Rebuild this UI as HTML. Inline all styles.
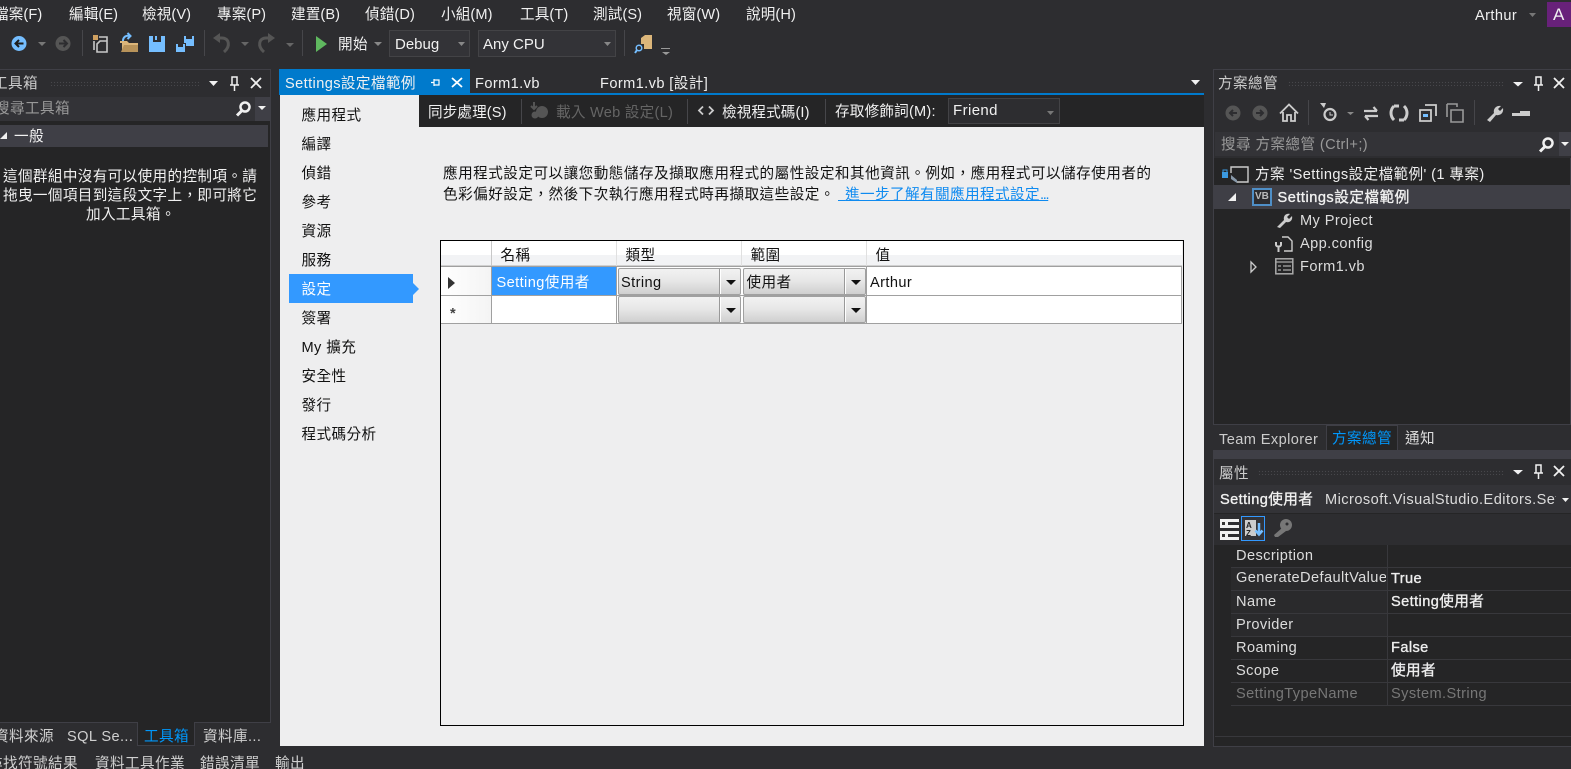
<!DOCTYPE html>
<html><head><meta charset="utf-8"><style>
html,body{margin:0;padding:0;background:#2d2d30;width:1571px;height:769px;overflow:hidden}
body{position:relative;font-family:"Liberation Sans","Noto Sans CJK TC",sans-serif;font-size:14.6px;color:#f1f1f1}
.t{position:absolute;white-space:nowrap;line-height:20px;margin-top:1px;letter-spacing:.4px}
.m{letter-spacing:.1px}
.sb{-webkit-text-stroke:.35px currentColor}
.b{position:absolute;box-sizing:border-box}
svg{position:absolute;overflow:visible}
.d{color:#111}
.r{position:absolute;background:#38383c;height:1px}
.grip{position:absolute;height:5px;background-image:radial-gradient(#47474b 0.7px,transparent 0.8px);background-size:3px 3px}
.cb{position:absolute;box-sizing:border-box;width:123px;height:27px;border:1px solid #a0a0a0;border-radius:2px;background:linear-gradient(#f2f2f2,#e6e6e6 50%,#cfcfcf)}
.cb i{position:absolute;right:19px;top:0;bottom:0;width:2px;box-sizing:border-box;background:#fff;border-left:1px solid #999}
.cb b{position:absolute;right:4px;top:11px;border:5px solid transparent;border-top:5px solid #111;border-bottom:0}
</style></head><body>
<!-- menu -->
<div class="t m" style="left:-6px;top:4px">檔案(F)</div>
<div class="t m" style="left:69px;top:4px">編輯(E)</div>
<div class="t m" style="left:142px;top:4px">檢視(V)</div>
<div class="t m" style="left:217px;top:4px">專案(P)</div>
<div class="t m" style="left:291px;top:4px">建置(B)</div>
<div class="t m" style="left:365px;top:4px">偵錯(D)</div>
<div class="t m" style="left:441px;top:4px">小組(M)</div>
<div class="t m" style="left:520px;top:4px">工具(T)</div>
<div class="t m" style="left:593px;top:4px">測試(S)</div>
<div class="t m" style="left:667px;top:4px">視窗(W)</div>
<div class="t m" style="left:746px;top:4px">說明(H)</div>
<div class="t" style="left:1475px;top:5px">Arthur</div>
<svg style="left:1529px;top:13px" width="8" height="4"><path d="M0 0h7l-3.500 4z" fill="#777"/></svg>
<div class="b" style="left:1547px;top:2px;width:24px;height:25px;background:#68217a"></div>
<div class="t" style="left:1553px;top:4px;font-size:17px">A</div>
<!-- toolbar -->
<svg style="left:0;top:28px" width="680" height="34">
<circle cx="19" cy="15.500" r="7.500" fill="#75beff"/><path d="M23.500 15.500h-8m3.500-3.500l-3.500 3.500 3.500 3.500" stroke="#1e1e1e" stroke-width="2" fill="none"/>
<path d="M38 14h8l-4 4z" fill="#777"/>
<circle cx="63" cy="15.500" r="7.500" fill="#555"/><path d="M59 15.500h8m-3.500-3.500l3.500 3.500-3.500 3.500" stroke="#2d2d30" stroke-width="2" fill="none"/>
<rect x="82" y="2" width="1" height="26" fill="#46464a"/>
<path d="M99 9h8v5M100 13h7v11h-10v-8zM94 13v9" stroke="#c8c8c8" stroke-width="1.600" fill="none"/><path d="M93 7h5v5h-5z" fill="#d0a060"/>
<path d="M120 15h2v9h16v-9h-9l-2-2-7 0z" fill="#dcb67a"/><path d="M121 24l3-7h14v7z" fill="#b8935a"/><path d="M123 13c0-4 3-6 7-5m-2.500-3l3 3-3 3" stroke="#75beff" stroke-width="2" fill="none"/>
<path d="M149 8h16v16h-16z" fill="#75beff"/><path d="M153 8h8v6h-8z" fill="#2d2d30"/><rect x="155" y="8" width="2" height="4" fill="#75beff"/>
<path d="M176 16h9v8h-9zM184 8h10v10h-8v-3h-2z" fill="#75beff"/><path d="M178 16h5v3h-5zM186 8h6v3h-6z" fill="#2d2d30"/>
<rect x="204" y="2" width="1" height="26" fill="#46464a"/>
<path d="M213 10l7-5v10z" fill="#555"/><path d="M219 10h3c7 0 9 8 2 14" stroke="#555" stroke-width="3" fill="none"/>
<path d="M241 14h8l-4 4z" fill="#666"/>
<path d="M275 10l-7-5v10z" fill="#555"/><path d="M269 10h-3c-7 0-9 8-2 14" stroke="#555" stroke-width="3" fill="none"/>
<path d="M286 15h8l-4 4z" fill="#666"/>
<rect x="302" y="2" width="1" height="26" fill="#46464a"/>
<path d="M316 8l11 8-11 8z" fill="#5fb85f"/>
<path d="M374 14h8l-4 4z" fill="#888"/>
<rect x="624" y="2" width="1" height="26" fill="#46464a"/>
<path d="M641 10l4-3h7v14h-8v-5h-3z" fill="#dcb67a"/><circle cx="639" cy="20" r="2.800" stroke="#75beff" stroke-width="1.500" fill="none"/><path d="M637 22l-2 3" stroke="#75beff" stroke-width="2"/>
<path d="M662 24h8l-4 3z" fill="#999"/><rect x="661" y="20" width="9" height="1" fill="#999"/>
</svg>
<div class="t" style="left:338px;top:34px">開始</div>
<div class="b" style="left:389px;top:30px;width:81px;height:27px;border:1px solid #434346;background:#333337"></div>
<div class="t" style="left:395px;top:34px;font-size:15px;letter-spacing:0">Debug</div>
<svg style="left:458px;top:42px" width="8" height="4"><path d="M0 0h7l-3.500 4z" fill="#888"/></svg>
<div class="b" style="left:478px;top:30px;width:138px;height:27px;border:1px solid #434346;background:#333337"></div>
<div class="t" style="left:483px;top:34px;font-size:15px;letter-spacing:0">Any CPU</div>
<svg style="left:604px;top:42px" width="8" height="4"><path d="M0 0h7l-3.500 4z" fill="#888"/></svg>
<!-- toolbox -->
<div class="b" style="left:-2px;top:69px;width:273px;height:654px;border:1px solid #3f3f46;background:#252526"></div>
<div class="b" style="left:0;top:70px;width:270px;height:27px;background:#2d2d30"></div>
<div class="t" style="left:-7px;top:73px;color:#ccc">工具箱</div>
<div class="grip" style="left:50px;top:81px;width:150px"></div>
<svg style="left:208px;top:74px" width="60" height="20"><path d="M1 7h9l-4.500 5z" fill="#f1f1f1"/><path d="M24 3h5v8h-5zM22 11h9M26.500 11v6" stroke="#f1f1f1" stroke-width="1.500" fill="none"/><path d="M43 4l10 10M53 4l-10 10" stroke="#f1f1f1" stroke-width="1.800"/></svg>
<div class="b" style="left:0;top:97px;width:270px;height:24px;background:#333337"></div>
<div class="b" style="left:255px;top:97px;width:15px;height:24px;background:#3f3f46"></div>
<div class="t" style="left:-5px;top:98px;color:#999">搜尋工具箱</div>
<svg style="left:234px;top:99px" width="32" height="20"><circle cx="11" cy="8" r="4.500" stroke="#f1f1f1" stroke-width="2.500" fill="none"/><path d="M8 11.500l-5 5" stroke="#f1f1f1" stroke-width="3"/><path d="M24 7h8l-4 4z" fill="#f1f1f1"/></svg>
<div class="b" style="left:0;top:125px;width:268px;height:22px;background:#3f3f46"></div>
<svg style="left:0;top:132px" width="8" height="8"><path d="M7 0v7h-7z" fill="#f1f1f1"/></svg>
<div class="t" style="left:14px;top:126px">一般</div>
<div class="t" style="left:3px;top:166px;letter-spacing:.36px">這個群組中沒有可以使用的控制項。請</div>
<div class="t" style="left:3px;top:185px;letter-spacing:.36px">拖曳一個項目到這段文字上，即可將它</div>
<div class="t" style="left:86px;top:204px;letter-spacing:.36px">加入工具箱。</div>
<div class="b" style="left:137px;top:722px;width:58px;height:24px;background:#252526;border:1px solid #3f3f46;border-top:0"></div>
<div class="t" style="left:-6px;top:726px;color:#d0d0d0">資料來源</div>
<div class="t" style="left:67px;top:726px;color:#d0d0d0">SQL Se...</div>
<div class="t" style="left:144px;top:726px;color:#0097fb">工具箱</div>
<div class="t" style="left:203px;top:726px;color:#d0d0d0">資料庫...</div>
<div class="t" style="left:-12px;top:753px;color:#d0d0d0">尋找符號結果</div>
<div class="t" style="left:95px;top:753px;color:#d0d0d0">資料工具作業</div>
<div class="t" style="left:200px;top:753px;color:#d0d0d0">錯誤清單</div>
<div class="t" style="left:275px;top:753px;color:#d0d0d0">輸出</div>
<!-- document -->
<div class="b" style="left:279px;top:69px;width:191px;height:24px;background:#007acc"></div>
<div class="b" style="left:279px;top:93px;width:925px;height:2px;background:#007acc"></div>
<div class="t" style="left:285px;top:73px">Settings設定檔範例</div>
<svg style="left:428px;top:75px" width="40" height="15"><path d="M3 7.500h3M6 5h5v5h-5zM6 4v7" stroke="#fff" stroke-width="1.200" fill="none"/><path d="M24 3l10 9M34 3l-10 9" stroke="#fff" stroke-width="1.800"/></svg>
<div class="t" style="left:475px;top:73px">Form1.vb</div>
<div class="t" style="left:600px;top:73px">Form1.vb [設計]</div>
<svg style="left:1191px;top:80px" width="10" height="6"><path d="M0 0h9l-4.500 5z" fill="#f1f1f1"/></svg>
<div class="b" style="left:280px;top:95px;width:924px;height:651px;background:#eeeeef"></div>
<div class="b" style="left:419px;top:95px;width:785px;height:32px;background:#252526"></div>
<div class="t m" style="left:428px;top:102px">同步處理(S)</div>
<div class="b" style="left:521px;top:99px;width:1px;height:25px;background:#46464a"></div>
<svg style="left:530px;top:101px" width="20" height="20"><circle cx="12" cy="11" r="6" fill="#555"/><circle cx="5" cy="14" r="3.500" fill="#555"/><path d="M4 1v6M1 5l3 3 3-3" stroke="#555" stroke-width="2" fill="none"/></svg>
<div class="t" style="left:556px;top:102px;color:#656565;letter-spacing:.25px">載入 Web 設定(L)</div>
<div class="b" style="left:687px;top:99px;width:1px;height:25px;background:#46464a"></div>
<svg style="left:698px;top:105px" width="16" height="12"><path d="M5 1.500l-4 4 4 4M11 1.500l4 4-4 4" stroke="#ccc" stroke-width="1.800" fill="none"/></svg>
<div class="t m" style="left:722px;top:102px">檢視程式碼(I)</div>
<div class="b" style="left:825px;top:99px;width:1px;height:25px;background:#46464a"></div>
<div class="t" style="left:835px;top:101px;letter-spacing:.2px">存取修飾詞(M):</div>
<div class="b" style="left:948px;top:98px;width:112px;height:26px;border:1px solid #434346;background:#2d2d30"></div>
<div class="t" style="left:953px;top:100px;font-size:15px">Friend</div>
<svg style="left:1047px;top:111px" width="8" height="4"><path d="M0 0h7l-3.500 4z" fill="#777"/></svg>
<!-- nav -->
<div class="t d" style="left:301.500px;top:105px">應用程式</div>
<div class="t d" style="left:301.500px;top:134px">編譯</div>
<div class="t d" style="left:301.500px;top:163px">偵錯</div>
<div class="t d" style="left:301.500px;top:192px">參考</div>
<div class="t d" style="left:301.500px;top:221px">資源</div>
<div class="t d" style="left:301.500px;top:250px">服務</div>
<div class="b" style="left:289px;top:274px;width:124px;height:29px;background:#3399ff"></div>
<svg style="left:413px;top:283px" width="6" height="12"><path d="M0 0l6 6-6 6z" fill="#3399ff"/></svg>
<div class="t" style="left:301.500px;top:279px;color:#fff">設定</div>
<div class="t d" style="left:301.500px;top:308px">簽署</div>
<div class="t d" style="left:301.500px;top:337px">My 擴充</div>
<div class="t d" style="left:301.500px;top:366px">安全性</div>
<div class="t d" style="left:301.500px;top:395px">發行</div>
<div class="t d" style="left:301.500px;top:424px">程式碼分析</div>
<div class="t d" style="left:443px;top:163px;letter-spacing:.48px">應用程式設定可以讓您動態儲存及擷取應用程式的屬性設定和其他資訊。例如，應用程式可以儲存使用者的</div>
<div class="t d" style="left:443px;top:184px;letter-spacing:.48px">色彩偏好設定，然後下次執行應用程式時再擷取這些設定。</div>
<div class="t" style="left:838px;top:184px;color:#0e8af0;text-decoration:underline;white-space:pre"><span style="letter-spacing:3px"> </span>進一步了解有關應用程式設定<span style="letter-spacing:-1.300px">...</span></div>
<!-- grid -->
<div class="b" style="left:440px;top:240px;width:744px;height:486px;border:1px solid #000;background:#eeeeef"></div>
<div class="b" style="left:441px;top:241px;width:741px;height:25px;background:linear-gradient(#fff,#fff 55%,#f2f3f5 56%,#f2f3f5)"></div>
<div class="b" style="left:441px;top:265px;width:741px;height:1px;background:#d0d0d0"></div>
<div class="b" style="left:441px;top:266px;width:741px;height:1px;background:#a0a0a0"></div>
<div class="b" style="left:491px;top:241px;width:1px;height:25px;background:#c8c8c8"></div>
<div class="b" style="left:616px;top:241px;width:1px;height:25px;background:#e0e0e0"></div>
<div class="b" style="left:741px;top:241px;width:1px;height:25px;background:#e0e0e0"></div>
<div class="b" style="left:866px;top:241px;width:1px;height:25px;background:#e0e0e0"></div>
<div class="t d" style="left:500.500px;top:245px">名稱</div>
<div class="t d" style="left:625.500px;top:245px">類型</div>
<div class="t d" style="left:750.500px;top:245px">範圍</div>
<div class="t d" style="left:875.500px;top:245px">值</div>
<div class="b" style="left:441px;top:267px;width:50px;height:56px;background:linear-gradient(90deg,#fff,#f4f4f4)"></div>
<div class="b" style="left:492px;top:267px;width:689px;height:56px;background:#fff"></div>
<div class="b" style="left:492px;top:267px;width:124px;height:28px;background:#3399ff"></div>
<div class="b" style="left:441px;top:295px;width:741px;height:1px;background:#a0a0a0"></div>
<div class="b" style="left:441px;top:323px;width:741px;height:1px;background:#a0a0a0"></div>
<div class="b" style="left:491px;top:267px;width:1px;height:57px;background:#a0a0a0"></div>
<div class="b" style="left:616px;top:267px;width:1px;height:57px;background:#a0a0a0"></div>
<div class="b" style="left:866px;top:267px;width:1px;height:57px;background:#a0a0a0"></div>
<div class="b" style="left:1181px;top:266px;width:1px;height:58px;background:#a0a0a0"></div>
<svg style="left:448px;top:277px" width="8" height="13"><path d="M0 0l7 6-7 6z" fill="#333"/></svg>
<div class="t" style="left:450px;top:303px;color:#444;font-weight:bold">*</div>
<div class="t" style="left:496.500px;top:272px;color:#fff">Setting使用者</div>
<div class="cb" style="left:618px;top:268px"><i></i><b></b></div>
<div class="cb" style="left:743px;top:268px"><i></i><b></b></div>
<div class="cb" style="left:618px;top:296px"><i></i><b></b></div>
<div class="cb" style="left:743px;top:296px"><i></i><b></b></div>
<div class="t d" style="left:621px;top:272px">String</div>
<div class="t d" style="left:746.500px;top:272px">使用者</div>
<div class="t d" style="left:870px;top:272px">Arthur</div>
<!-- solution explorer -->
<div class="b" style="left:1213px;top:69px;width:358px;height:356px;border:1px solid #3f3f46;background:#252526"></div>
<div class="b" style="left:1214px;top:70px;width:357px;height:88px;background:#2d2d30"></div>
<div class="t" style="left:1218px;top:73px;color:#ccc">方案總管</div>
<div class="grip" style="left:1288px;top:81px;width:216px"></div>
<svg style="left:1510px;top:74px" width="60" height="20"><path d="M3 8h10l-5 4.500z" fill="#f1f1f1"/><path d="M26 3h5v8h-5zM24 11h9M28.500 11v6" stroke="#f1f1f1" stroke-width="1.500" fill="none"/><path d="M44 4l10 10M54 4l-10 10" stroke="#f1f1f1" stroke-width="1.800"/></svg>
<svg style="left:1220px;top:100px" width="340" height="26">
<circle cx="13" cy="13" r="7.500" fill="#555"/><path d="M17 13h-7m3-3l-3 3 3 3" stroke="#2d2d30" stroke-width="2" fill="none"/>
<circle cx="40" cy="13" r="7.500" fill="#555"/><path d="M36 13h7m-3-3l3 3-3 3" stroke="#2d2d30" stroke-width="2" fill="none"/>
<path d="M60 13.500l9-9 9 9M63 12v9h4v-6h4v6h4v-9" stroke="#ccc" stroke-width="1.800" fill="none"/>
<rect x="88" y="0" width="1" height="25" fill="#46464a"/>
<circle cx="110" cy="14.500" r="5.500" stroke="#ccc" stroke-width="2.200" fill="none"/><path d="M110 12v3h3" stroke="#ccc" fill="none"/><path d="M100 3l6 0-2 5z" fill="#ccc"/>
<path d="M127 12h7l-3.500 3z" fill="#888"/>
<path d="M144 11h13m-3.500-4l3.500 4M158 16h-13m3.500 4l-3.500-4" stroke="#ccc" stroke-width="2.200" fill="none"/>
<path d="M174 6c-4 4-4 10 0 14M184 20c4-4 4-10 0-14M174 6h5M184 20h-5" stroke="#ccc" stroke-width="3" fill="none"/>
<path d="M200 10h11v11h-11zM205 5h11v11" stroke="#ccc" stroke-width="1.800" fill="none"/><rect x="203" y="14" width="5" height="3" fill="#75beff"/>
<path d="M231 10h12v12h-12zM227 4h10v3M227 4v13" stroke="#999" stroke-width="1.600" fill="none"/>
<rect x="254" y="0" width="1" height="25" fill="#46464a"/>
<path d="M267 20l7-7c-1-4 2-8 7-7l-3 3 2 2 3-3c1 5-3 8-7 7l-6 7z" fill="#ccc"/>
<path d="M292 13h8v-2h10v5h-18z" fill="#ccc"/>
</svg>
<div class="b" style="left:1215px;top:132px;width:356px;height:24px;background:#333337"></div>
<div class="b" style="left:1559px;top:132px;width:12px;height:24px;background:#3f3f46"></div>
<div class="t" style="left:1221px;top:134px;color:#999">搜尋 方案總管 (Ctrl+;)</div>
<svg style="left:1537px;top:135px" width="34" height="20"><circle cx="11" cy="8" r="4.500" stroke="#f1f1f1" stroke-width="2.500" fill="none"/><path d="M8 11.500l-5 5" stroke="#f1f1f1" stroke-width="3"/><path d="M24 7h8l-4 4z" fill="#f1f1f1"/></svg>
<svg style="left:1220px;top:165px" width="30" height="20"><rect x="2" y="7" width="6" height="6" fill="#3b9ae1"/><path d="M3 7v-2h4v2" stroke="#3b9ae1" fill="none"/><path d="M11 8v-6h17v15h-11" stroke="#ccc" stroke-width="1.400" fill="none"/><path d="M11 10l6 5v3l-6-4z" fill="#89a"/></svg>
<div class="t" style="left:1255px;top:164px;color:#eee">方案 'Settings設定檔範例' (1 專案)</div>
<div class="b" style="left:1214px;top:185px;width:357px;height:24px;background:#3f3f46"></div>
<svg style="left:1228px;top:193px" width="9" height="9"><path d="M8 0v8h-8z" fill="#f1f1f1"/></svg>
<div class="b" style="left:1252px;top:188px;width:20px;height:18px;border:2px solid #4f8fc7;background:#2d2d30"></div>
<div class="t" style="left:1255px;top:186px;font-size:10px;font-weight:bold;color:#bbb;letter-spacing:0">VB</div>
<div class="t sb" style="left:1277.500px;top:187px;color:#f1f1f1;letter-spacing:.5px">Settings設定檔範例</div>
<svg style="left:1276px;top:211px" width="18" height="18"><path d="M1 16l7-7c-1-4 2-7 6-6l-3 3 2 2 3-3c1 4-2 7-6 6l-6 6z" fill="#ccc"/></svg>
<div class="t" style="left:1300px;top:210px;color:#ddd">My Project</div>
<svg style="left:1275px;top:235px" width="20" height="18"><path d="M7 2h6l4 4v10h-8" stroke="#ccc" stroke-width="1.400" fill="none"/><path d="M1 7v3c0 2 5 2 5 0v-3M3.500 11v6" stroke="#ccc" stroke-width="2" fill="none"/></svg>
<div class="t" style="left:1300px;top:233px;color:#ddd">App.config</div>
<svg style="left:1250px;top:261px" width="8" height="12"><path d="M1 1l5 5-5 5z" stroke="#ccc" stroke-width="1.300" fill="none"/></svg>
<svg style="left:1275px;top:258px" width="19" height="17"><rect x=".8" y=".8" width="17" height="15" stroke="#aaa" stroke-width="1.500" fill="none"/><path d="M1 4h17M3 8h3M8 8h8M3 12h3M8 12h8" stroke="#aaa" stroke-width="1.300" fill="none"/></svg>
<div class="t" style="left:1300px;top:256px;color:#ddd">Form1.vb</div>
<div class="b" style="left:1326px;top:425px;width:72px;height:25px;background:#252526;border:1px solid #3f3f46;border-bottom:0"></div>
<div class="t" style="left:1219px;top:429px;color:#ccc">Team Explorer</div>
<div class="t" style="left:1332px;top:428px;color:#0097fb">方案總管</div>
<div class="t" style="left:1405px;top:428px;color:#ddd">通知</div>
<div class="b" style="left:1213px;top:450px;width:358px;height:8px;background:#3f3f46"></div>
<!-- properties -->
<div class="b" style="left:1213px;top:458px;width:358px;height:289px;border:1px solid #3f3f46;background:#252526"></div>
<div class="b" style="left:1214px;top:459px;width:357px;height:86px;background:#2d2d30"></div>
<div class="t" style="left:1219px;top:463px;color:#ccc">屬性</div>
<div class="grip" style="left:1258px;top:470px;width:246px"></div>
<svg style="left:1510px;top:463px" width="60" height="20"><path d="M3 7h10l-5 4.500z" fill="#f1f1f1"/><path d="M26 2h5v8h-5zM24 10h9M28.500 10v6" stroke="#f1f1f1" stroke-width="1.500" fill="none"/><path d="M44 3l10 10M54 3l-10 10" stroke="#f1f1f1" stroke-width="1.800"/></svg>
<div class="b" style="left:1214px;top:485px;width:357px;height:29px;background:#333337;border-bottom:1px solid #252526"></div>
<div class="b" style="left:1220px;top:489px;width:336px;height:21px;overflow:hidden"><div class="t sb" style="left:0;top:0;color:#f1f1f1">Setting使用者</div><div class="t" style="left:105px;top:0;color:#ddd;letter-spacing:.45px">Microsoft.VisualStudio.Editors.SettingsDesigner</div></div>
<svg style="left:1562px;top:498px" width="8" height="5"><path d="M0 0h7l-3.500 4z" fill="#f1f1f1"/></svg>
<svg style="left:1216px;top:515px" width="80" height="28"><path d="M4 4h19v3h-11v3h11v3h-19zM4 16h19v3h-11v3h11v3h-19z" fill="#f1f1f1"/><rect x="6" y="7" width="3" height="3" fill="#333"/><rect x="6" y="19" width="3" height="3" fill="#333"/><rect x="25.500" y="1.500" width="23" height="24" stroke="#3399ff" fill="#333337"/><path d="M29 5h11v16h-11z" fill="#ccc"/><text x="30" y="13" font-size="8" font-weight="bold" fill="#222">A</text><text x="30" y="21" font-size="8" font-weight="bold" fill="#222">Z</text><path d="M43 8v11m-3.500-3.500l3.500 4 3.500-4" stroke="#75beff" stroke-width="2.500" fill="none"/><circle cx="70" cy="10" r="6" fill="#777"/><path d="M66 13l-8 7 1 2h3l8-6z" fill="#777"/><circle cx="71" cy="9" r="1.500" fill="#2d2d30"/></svg>
<div class="b" style="left:1231px;top:545px;width:340px;height:160px;background:#252526"></div>
<div class="b" style="left:1231px;top:568px;width:156px;height:68px;background:#2a2a2c"></div>
<div class="b" style="left:1214px;top:705px;width:357px;height:41px;background:#252526"></div>
<div class="r" style="left:1231px;top:567px;width:340px"></div>
<div class="r" style="left:1231px;top:590px;width:340px"></div>
<div class="r" style="left:1231px;top:613px;width:340px"></div>
<div class="r" style="left:1231px;top:636px;width:340px"></div>
<div class="r" style="left:1231px;top:659px;width:340px"></div>
<div class="r" style="left:1231px;top:682px;width:340px"></div>
<div class="r" style="left:1231px;top:705px;width:340px"></div>
<div class="r" style="left:1387px;top:545px;width:1px;height:160px"></div>
<div class="r" style="left:1215px;top:736px;width:356px"></div>
<div class="t" style="left:1236px;top:545px;color:#ddd">Description</div>
<div class="b" style="left:1236px;top:568px;width:150px;height:22px;overflow:hidden"><div class="t" style="left:0;top:0;color:#ddd;margin-top:0">GenerateDefaultValue</div></div>
<div class="t sb" style="left:1391px;top:568px;color:#eee">True</div>
<div class="t" style="left:1236px;top:591px;color:#ddd">Name</div>
<div class="t sb" style="left:1391px;top:591px;color:#eee">Setting使用者</div>
<div class="t" style="left:1236px;top:614px;color:#ddd">Provider</div>
<div class="t" style="left:1236px;top:637px;color:#ddd">Roaming</div>
<div class="t sb" style="left:1391px;top:637px;color:#eee">False</div>
<div class="t" style="left:1236px;top:660px;color:#ddd">Scope</div>
<div class="t sb" style="left:1391px;top:660px;color:#eee">使用者</div>
<div class="t" style="left:1236px;top:683px;color:#777">SettingTypeName</div>
<div class="t" style="left:1391px;top:683px;color:#777">System.String</div>
</body></html>
